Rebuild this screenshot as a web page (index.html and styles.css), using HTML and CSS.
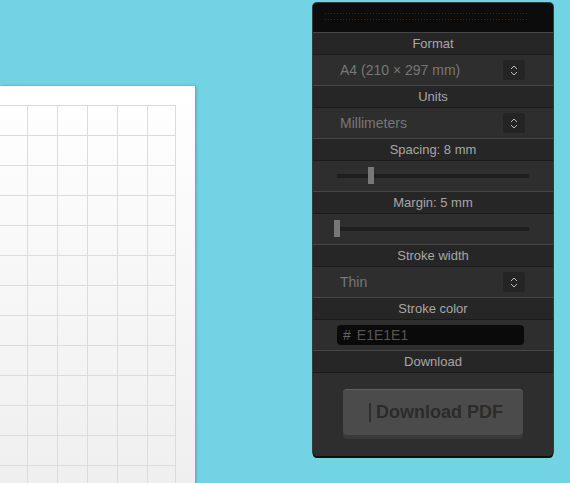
FILE: index.html
```html
<!DOCTYPE html>
<html>
<head>
<meta charset="utf-8">
<link rel="stylesheet" href="styles.css">
</head>
<body>
<div class="stage">
  <div class="paper">
    <div class="grid"></div>
  </div>
  <div class="panel">
    <div class="handle"><div class="dots"></div><div class="dots"></div></div>
    <div class="label">Format</div>
    <div class="row select"><span>A4 (210 × 297 mm)</span><span class="spin"><svg width="8" height="11" viewBox="0 0 8 11"><path d="M1 4 L4 1 L7 4 M1 7 L4 10 L7 7" fill="none" stroke="#bbb" stroke-width="1"/></svg></span></div>
    <div class="label">Units</div>
    <div class="row select"><span>Millimeters</span><span class="spin"><svg width="8" height="11" viewBox="0 0 8 11"><path d="M1 4 L4 1 L7 4 M1 7 L4 10 L7 7" fill="none" stroke="#bbb" stroke-width="1"/></svg></span></div>
    <div class="label">Spacing: 8 mm</div>
    <div class="row slider"><div class="track"><div class="thumb thumb-spacing"></div></div></div>
    <div class="label">Margin: 5 mm</div>
    <div class="row slider"><div class="track"><div class="thumb thumb-margin"></div></div></div>
    <div class="label">Stroke width</div>
    <div class="row select"><span>Thin</span><span class="spin"><svg width="8" height="11" viewBox="0 0 8 11"><path d="M1 4 L4 1 L7 4 M1 7 L4 10 L7 7" fill="none" stroke="#bbb" stroke-width="1"/></svg></span></div>
    <div class="label">Stroke color</div>
    <div class="row color"><div class="colorbox"><span class="hash">#</span><span class="hex">E1E1E1</span></div></div>
    <div class="label">Download</div>
    <div class="btnrow"><div class="btn"><span class="caret"></span>Download PDF</div></div>
  </div>
</div>
</body>
</html>
```
FILE: styles.css
```css
html, body {
  margin: 0;
  padding: 0;
  background: #72d3e5;
  font-family: "Liberation Sans", Arial, sans-serif;
  overflow: hidden;
}
.stage {
  position: relative;
  width: 570px;
  height: 483px;
}
.paper {
  position: absolute;
  left: 0;
  top: 86px;
  width: 195px;
  height: 420px;
  background: linear-gradient(to bottom, #ffffff 0%, #f8f8f8 40%, #eeeeee 100%);
  box-shadow: 1px 0 3px rgba(0,0,0,0.25);
  padding: 19px 19px 0 0;
  box-sizing: border-box;
}
.grid {
  width: 176px;
  height: 400px;
  box-sizing: border-box;
  border-right: 1px solid #dcdcdc;
  background-image:
    linear-gradient(to right, #dcdcdc 1px, transparent 1px),
    linear-gradient(to bottom, #dcdcdc 1px, transparent 1px);
  background-size: 30px 30px, 30px 30px;
  background-position: 27px 0, 0 0;
}
.panel {
  position: absolute;
  left: 313px;
  top: 3px;
  width: 240px;
  background: #2e2e2e;
  border-radius: 4px;
  box-shadow: 0 2px 0 #0e0e0e, 0 0 0 1px #3a3a3a;
  overflow: hidden;
}
.handle {
  height: 29px;
  background: #0c0c0c;
  padding: 10px 26px 0 12px;
  box-sizing: border-box;
}
.dots {
  height: 1px;
  margin-bottom: 5px;
  background-image: linear-gradient(to right, #3a2a1e 1px, transparent 1px);
  background-size: 3px 1px;
}
.label {
  height: 21px;
  line-height: 21px;
  border-top: 1px solid #464646;
  border-bottom: 1px solid #1b1b1b;
  background: #262626;
  color: #a6a6a6;
  font-size: 13px;
  text-align: center;
}
.row {
  height: 30px;
  background: #2e2e2e;
  display: flex;
  align-items: center;
}
.select {
  justify-content: space-between;
  padding: 0 28px 0 27px;
  color: #777;
  font-size: 14px;
}
.spin {
  width: 22px;
  height: 20px;
  background: #242424;
  border-radius: 3px;
  display: flex;
  align-items: center;
  justify-content: center;
}
.slider {
  padding: 0 24px;
}
.track {
  position: relative;
  flex: 1;
  height: 4px;
  background: #1f1f1f;
}
.thumb {
  position: absolute;
  top: -7px;
  width: 6px;
  height: 17px;
  background: #787878;
}
.thumb-spacing { left: 31px; }
.thumb-margin { left: -3px; }
.color {
  padding: 0 29px 0 24px;
}
.colorbox {
  flex: 1;
  height: 20px;
  line-height: 20px;
  background: #0a0a0a;
  border-radius: 4px;
  color: #555;
  font-size: 14px;
  padding-left: 6px;
}
.hash { color: #666; margin-right: 6px; }
.btnrow {
  padding: 16px 0 21px;
  display: flex;
  justify-content: center;
}
.btn {
  width: 180px;
  height: 46px;
  box-sizing: border-box;
  background: #4b4b4b;
  border-top: 1px solid #606060;
  border-radius: 4px;
  box-shadow: 0 4px 0 #3a3a3a;
  color: #2b2b2b;
  font-weight: bold;
  font-size: 18px;
  display: flex;
  align-items: center;
  justify-content: center;
  padding-left: 6px;
}
.caret {
  display: inline-block;
  width: 2px;
  height: 19px;
  background: #2e2e2e;
  margin-right: 5px;
}
```
